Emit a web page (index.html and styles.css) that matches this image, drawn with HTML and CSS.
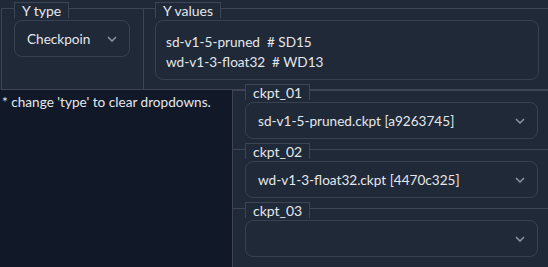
FILE: index.html
```html
<!DOCTYPE html>
<html>
<head>
<meta charset="utf-8">
<link rel="stylesheet" href="styles.css">
</head>
<body>
<div class="page">
  <div class="top-row">
    <div class="block ytype">
      <span class="tab">Y type</span>
      <div class="select ytype-select">
        <span class="value">Checkpoin</span>
        <svg class="chev" width="10" height="6" viewBox="0 0 10 6"><polyline points="1,1 5,5 9,1"/></svg>
      </div>
    </div>
    <div class="block yvalues">
      <span class="tab">Y values</span>
      <div class="textarea"><div>sd-v1-5-pruned  # SD15</div><div>wd-v1-3-float32  # WD13</div></div>
    </div>
  </div>
  <div class="bottom-row">
    <div class="note">* change 'type' to clear dropdowns.</div>
    <div class="ckpt-col">
      <div class="block ckpt">
        <span class="tab">ckpt_01</span>
        <div class="select">
          <span class="value">sd-v1-5-pruned.ckpt [a9263745]</span>
          <svg class="chev" width="10" height="6" viewBox="0 0 10 6"><polyline points="1,1 5,5 9,1"/></svg>
        </div>
      </div>
      <div class="block ckpt">
        <span class="tab">ckpt_02</span>
        <div class="select">
          <span class="value">wd-v1-3-float32.ckpt [4470c325]</span>
          <svg class="chev" width="10" height="6" viewBox="0 0 10 6"><polyline points="1,1 5,5 9,1"/></svg>
        </div>
      </div>
      <div class="block ckpt">
        <span class="tab">ckpt_03</span>
        <div class="select">
          <span class="value"></span>
          <svg class="chev" width="10" height="6" viewBox="0 0 10 6"><polyline points="1,1 5,5 9,1"/></svg>
        </div>
      </div>
    </div>
  </div>
</div>
</body>
</html>
```

FILE: styles.css
```css
* { box-sizing: border-box; }
html, body { margin: 0; padding: 0; }
body {
  background: #1f2937;
  font-family: Lato, "Noto Sans", sans-serif;
  font-size: 13.6px;
  color: #e5e7eb;
}
.page {
  width: 548px;
  height: 267px;
  overflow: hidden;
  display: flex;
  flex-direction: column;
}
.top-row {
  display: flex;
  margin-top: 8px;
  margin-left: 1px;
  height: 82px;
  border: 1px solid #3d4555;
  border-right: none;
}
.block {
  display: flex;
  flex-direction: column;
  align-items: flex-start;
}
.tab {
  margin-top: -7px;
  margin-bottom: 2px;
  height: 16px;
  padding: 0 7px;
  border: 1px solid #3d4555;
  border-bottom: none;
  background: #1f2937;
  font-size: 14px;
  line-height: 15px;
  white-space: nowrap;
}
.ytype {
  width: 142px;
  padding-left: 12px;
  border-right: 1px solid #3d4555;
}
.yvalues {
  flex: 1;
  padding-left: 11px;
  padding-right: 9px;
}
.select {
  display: flex;
  align-items: center;
  justify-content: space-between;
  width: 100%;
  height: 37px;
  padding: 0 12px;
  border: 1px solid #374151;
  border-radius: 8px;
}
.ytype-select { width: 116px; }
.value { white-space: nowrap; }
.chev { flex: none; }
.chev polyline {
  fill: none;
  stroke: #8d95a3;
  stroke-width: 1.5;
}
.textarea {
  width: 100%;
  height: 60px;
  padding: 11px 10px;
  border: 1px solid #374151;
  border-radius: 8px;
  line-height: 20px;
  white-space: pre;
}
.bottom-row {
  flex: 1;
  display: flex;
}
.note {
  width: 232px;
  background: #111827;
  padding: 2px 2px;
  line-height: 20px;
  white-space: nowrap;
}
.ckpt-col {
  flex: 1;
  border-left: 1px solid #3d4555;
}
.ckpt {
  border-top: 1px solid #3d4555;
  padding: 0 10px 10px 12px;
}
```
